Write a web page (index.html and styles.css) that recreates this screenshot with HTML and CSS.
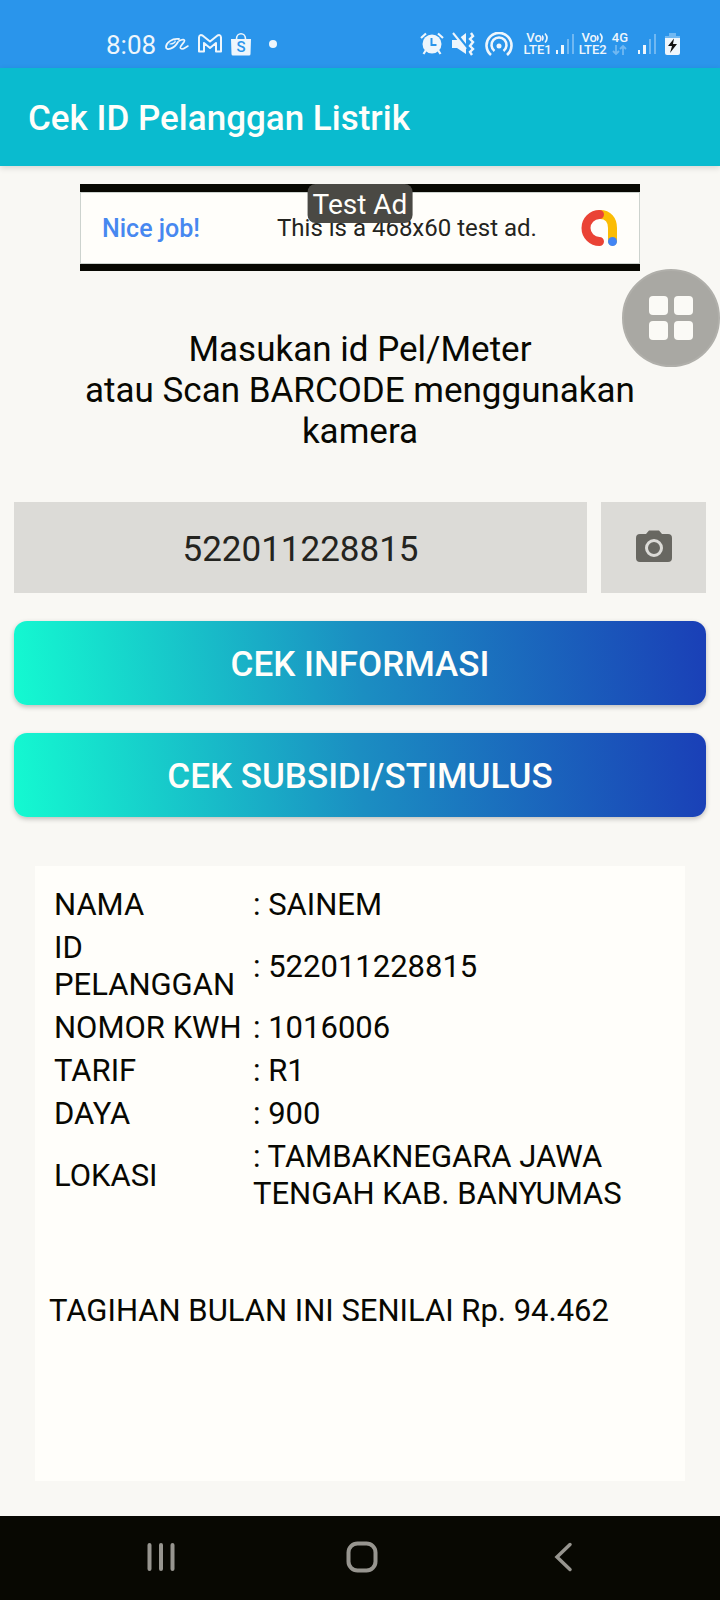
FILE: index.html
```html
<!DOCTYPE html>
<html lang="id">
<head>
<meta charset="utf-8">
<meta name="viewport" content="width=device-width, initial-scale=1">
<title>Cek ID Pelanggan Listrik</title>
<link rel="stylesheet" href="styles.css">
</head>
<body>
<div class="screen">
  <div class="status">
    <div class="status-left">
      <span class="clock">8:08</span>
      <svg width="24" height="24" viewBox="0 0 24 24" fill="none" stroke="#eef6fc" stroke-linecap="round"><path d="M14 7C7 6 1 11 1 15c0 4 8 2 12-5" stroke-width="1.800"/><path d="M5 12c3 0 6-2 5-3" stroke-width="1.200"/><path d="M14 9c3-2 7-2 5 1s-6 6-2 7c2 0 4-2 6-3" stroke-width="1.600"/></svg>
      <svg width="24" height="24" viewBox="0 0 24 24" fill="none" stroke="#eef6fc" stroke-width="2" stroke-linejoin="round"><path d="M1 19.500V5.500Q1.500 2 4.500 3.500L12 9.500l7.500-6Q22.500 2 23 5.500v14h-5V11l-6 5-6-5v8.500z"/></svg>
      <span class="bag"><svg width="20" height="24" viewBox="0 0 20 24"><path d="M5.500 7C5.500 0 14.500 0 14.500 7" fill="none" stroke="#eef6fc" stroke-width="1.600"/><path d="M0 7h20l-.500 15q0 1.500-1.500 1.500H2Q.500 23.500.500 22z" fill="#eef6fc"/></svg><span class="bag-letter">S</span></span>
      <span class="dot"></span>
    </div>
    <div class="status-right">
      <svg width="24" height="24" viewBox="0 0 24 24"><circle cx="12" cy="12" r="9.500" fill="#eef6fc"/><path d="M1 6l5-4.500M23 6l-5-4.500M6 18l-2.500 4M18 18l2.500 4" stroke="#eef6fc" stroke-width="2.200"/><path d="M11.500 6v7h5" fill="none" stroke="#2a95eb" stroke-width="2"/></svg>
      <svg class="gap-8" width="23" height="24" viewBox="0 0 23 24"><path d="M0 8h5l9-7v21l-9-6H0z" fill="#eef6fc"/><path d="M2 -1l14 18" stroke="#2a95eb" stroke-width="3"/><path d="M1 1l13 16" stroke="#eef6fc" stroke-width="2"/><path d="M19 1l2 3-3 3 3 3-3 4 3 3-3 3 2 3" fill="none" stroke="#eef6fc" stroke-width="2.400"/></svg>
      <svg class="gap-10" width="28" height="24" viewBox="0 0 28 24" fill="none" stroke="#eef6fc" stroke-width="2.600"><path d="M6 23a12.500 12.500 0 1 1 16 0"/><path d="M9.500 19a7.500 7.500 0 1 1 9 0"/><circle cx="14" cy="14" r="2.500" fill="#eef6fc" stroke="none"/></svg>
      <span class="lte gap-11"><span class="vo">Vo<svg width="7" height="12" viewBox="0 0 7 12" fill="none" stroke="#eef6fc" stroke-width="1.600"><path d="M0 3.500q2 2.500 0 5M3 1.500q4 4.500 0 9"/></svg></span><span>LTE1</span></span>
      <svg class="gap-4" width="19" height="22" viewBox="0 0 19 22"><path d="M0 17h2v4H0zM5 12h3v9H5z" fill="#eef6fc"/><path d="M11 6h2v15h-2zM16 1h2v20h-2z" fill="#70b8f2"/></svg>
      <span class="lte gap-4"><span class="vo">Vo<svg width="7" height="12" viewBox="0 0 7 12" fill="none" stroke="#eef6fc" stroke-width="1.600"><path d="M0 3.500q2 2.500 0 5M3 1.500q4 4.500 0 9"/></svg></span><span>LTE2</span></span>
      <span class="lte gap-5"><span>4G</span><svg width="15" height="12" viewBox="0 0 15 12" fill="none" stroke="#70b8f2" stroke-width="1.800"><path d="M4 1v9M1 7l3 3 3-3M11 11V2M8 5l3-3 3 3"/></svg></span>
      <svg class="gap-10" width="19" height="22" viewBox="0 0 19 22"><path d="M0 17h2v4H0zM5 12h3v9H5z" fill="#eef6fc"/><path d="M11 6h2v15h-2zM16 1h2v20h-2z" fill="#70b8f2"/></svg>
      <svg class="gap-8" width="15" height="24" viewBox="0 0 15 24"><path d="M4 1h7v3h4v4H0V4h4z" fill="#70b8f2"/><path d="M0 6h15v15q0 2-2 2H2q-2 0-2-2z" fill="#eef6fc"/><path d="M9 6.500L3 14h4l-2 7 7-9H8z" fill="#111"/></svg>
    </div>
  </div>

  <header class="appbar"><h1>Cek ID Pelanggan Listrik</h1></header>

  <main class="content">
    <div class="ad">
      <div class="ad-body">
        <span class="ad-lead">Nice job!</span>
        <span class="ad-text">This is a 468x60 test ad.</span>
        <svg width="38" height="38" viewBox="0 0 38 38" fill="none" stroke-linecap="round" stroke-width="9"><path d="M20 5.500C28 5.500 32.500 11 32.500 19v13" stroke="#fbbc04"/><path d="M19.500 5.500a13.500 13.500 0 0 0 0 27" stroke="#ea4335"/><circle cx="32.500" cy="32.500" r="4.500" fill="#4285f4"/></svg>
      </div>
      <span class="ad-badge">Test Ad</span>
    </div>

    <label class="prompt" for="meter">Masukan id Pel/Meter<br>atau Scan BARCODE menggunakan<br>kamera</label>

    <div class="entry">
      <input class="field" id="meter" type="text" inputmode="numeric" value="522011228815">
      <button class="camera" type="button" aria-label="Scan barcode"><svg width="36" height="32" viewBox="0 0 36 32"><path d="M4 4h6l3-3.500h10L26 4h6q4 0 4 4v20q0 4-4 4H4q-4 0-4-4V8q0-4 4-4z" fill="#686761"/><circle cx="18" cy="18" r="7.500" fill="none" stroke="#dcdbd7" stroke-width="3"/></svg></button>
    </div>
    <button class="action" type="button">CEK INFORMASI</button>
    <button class="action" type="button">CEK SUBSIDI/STIMULUS</button>

    <section class="result">
      <table class="details">
        <tbody>
          <tr><th scope="row">NAMA</th><td>: SAINEM</td></tr>
          <tr><th scope="row">ID PELANGGAN</th><td>: 522011228815</td></tr>
          <tr><th scope="row">NOMOR KWH</th><td>: 1016006</td></tr>
          <tr><th scope="row">TARIF</th><td>: R1</td></tr>
          <tr><th scope="row">DAYA</th><td>: 900</td></tr>
          <tr><th scope="row">LOKASI</th><td>: TAMBAKNEGARA JAWA TENGAH KAB. BANYUMAS</td></tr>
        </tbody>
      </table>
      <p class="bill">TAGIHAN BULAN INI SENILAI Rp. 94.462</p>
    </section>
  </main>

  <button class="floating" type="button" aria-label="Menu"><span></span><span></span><span></span><span></span></button>

  <nav class="navbar">
    <button type="button" aria-label="Recents"><svg width="32" height="32" viewBox="0 0 32 32" stroke="#97958f" stroke-width="4" stroke-linecap="round"><path d="M4.500 4v24M16 4v24M27.500 4v24"/></svg></button>
    <button type="button" aria-label="Home"><svg width="32" height="32" viewBox="0 0 32 32" fill="none" stroke="#97958f" stroke-width="4"><rect x="2.500" y="2.500" width="27" height="27" rx="9"/></svg></button>
    <button type="button" aria-label="Back"><svg width="32" height="32" viewBox="0 0 32 32" fill="none" stroke="#97958f" stroke-width="3.500" stroke-linecap="round"><path d="M23 3.500L10 16l13 12.500"/></svg></button>
  </nav>
</div>
</body>
</html>
```
FILE: styles.css
```css
* {
  box-sizing: border-box;
}

body {
  margin: 0;
  background: #f9f8f4;
  color: #080802;
  font-family: Roboto, "Liberation Sans", sans-serif;
}

button {
  border: 0;
  padding: 0;
  font-family: inherit;
}

svg {
  display: block;
  flex: none;
}

.screen {
  position: relative;
  display: flex;
  flex-direction: column;
  min-height: 100vh;
}

.status {
  display: flex;
  justify-content: space-between;
  height: 68px;
  padding: 20px 40px 0 106px;
  background: #2a95eb;
  color: #eef6fc;
}

.status-left,
.status-right {
  display: flex;
  align-items: center;
}

.status-left {
  gap: 9px;
}

.clock {
  padding-top: 2px;
  font-size: 26px;
  line-height: 32px;
}

.bag {
  position: relative;
}

.bag-letter {
  position: absolute;
  inset: 7px 0 0;
  color: #2a95eb;
  font-size: 15px;
  font-weight: 500;
  line-height: 17px;
  text-align: center;
}

.dot {
  width: 8px;
  height: 8px;
  margin-left: 9px;
  border-radius: 50%;
  background: #eef6fc;
}

.lte {
  display: flex;
  flex-direction: column;
  align-items: center;
  font-size: 13px;
  font-weight: 500;
  line-height: 12px;
}

.vo {
  display: flex;
}

.gap-4 { margin-left: 4px; }
.gap-5 { margin-left: 5px; }
.gap-8 { margin-left: 8px; }
.gap-10 { margin-left: 10px; }
.gap-11 { margin-left: 11px; }

.appbar {
  display: flex;
  align-items: center;
  height: 98px;
  padding: 2px 28px 0;
  background: #0abbcf;
  box-shadow: 0 2px 6px rgba(0, 0, 0, 0.14);
}

.appbar h1 {
  margin: 0;
  color: #fffefa;
  font-size: 35px;
  font-weight: 500;
  line-height: 41px;
}

.content {
  display: flex;
  flex: 1;
  flex-direction: column;
  padding: 18px 14px 35px;
}

.ad {
  position: relative;
  align-self: center;
  width: 100%;
  max-width: 560px;
  padding: 8px 0 7px;
  background: #080802;
}

.ad-body {
  display: flex;
  align-items: center;
  justify-content: space-between;
  height: 72px;
  padding: 0 21px;
  border: 1px solid #cdd3ce;
  background: #fffefa;
  font-size: 24px;
}

.ad-lead {
  color: #4788f0;
  font-size: 25px;
  font-weight: 500;
}

.ad-text {
  margin-left: 34px;
  color: #242420;
}

.ad-badge {
  position: absolute;
  top: 0;
  left: 50%;
  transform: translateX(-50%);
  padding: 2px 5px 0;
  border-radius: 8px;
  background: #4a4944;
  color: #fffefa;
  font-size: 28px;
  line-height: 37px;
  white-space: nowrap;
}

.prompt {
  margin: 58px 0 50px;
  font-size: 35px;
  line-height: 41px;
  text-align: center;
}

.entry {
  display: flex;
  gap: 14px;
  height: 91px;
}

.field {
  flex: 1;
  min-width: 0;
  border: 0;
  padding: 3px 0 0;
  background: #dcdbd7;
  color: #242420;
  font-family: inherit;
  font-size: 35px;
  text-align: center;
}

.camera {
  display: flex;
  align-items: center;
  justify-content: center;
  width: 105px;
  padding-bottom: 3px;
  background: #dcdbd7;
}

.action {
  height: 84px;
  margin-top: 28px;
  padding-top: 2px;
  border-radius: 13px;
  background: linear-gradient(83deg, #14fad1, #1b8ec2 50%, #1a3fb7);
  box-shadow: 0 2px 5px rgba(0, 0, 0, 0.24);
  color: #fffefa;
  font-size: 35px;
  font-weight: 500;
}

.result {
  flex: 1;
  margin: 49px 21px 0;
  padding: 15px 14px;
  background: #fffefa;
  font-size: 31px;
  line-height: 37px;
}

.details {
  width: 100%;
  border-spacing: 4px;
}

.details th,
.details td {
  padding: 1px;
  font-weight: 400;
  text-align: left;
  vertical-align: middle;
}

.details th {
  width: 195px;
}

.bill {
  margin: 75px 0 0;
}

.floating {
  position: absolute;
  top: 269px;
  right: 0;
  display: grid;
  grid-template-columns: 19px 19px;
  gap: 6px;
  place-content: center;
  width: 98px;
  height: 98px;
  border: 2px solid #b0afaa;
  border-radius: 50%;
  background: #a9a8a3;
}

.floating span {
  height: 19px;
  border-radius: 4px;
  background: #fbfaf6;
}

.navbar {
  display: grid;
  grid-template-columns: repeat(3, 1fr);
  height: 84px;
  padding: 0 57px 0 60px;
  background: #080802;
}

.navbar button {
  display: flex;
  align-items: center;
  justify-content: center;
  padding-bottom: 2px;
  background: none;
}
```
